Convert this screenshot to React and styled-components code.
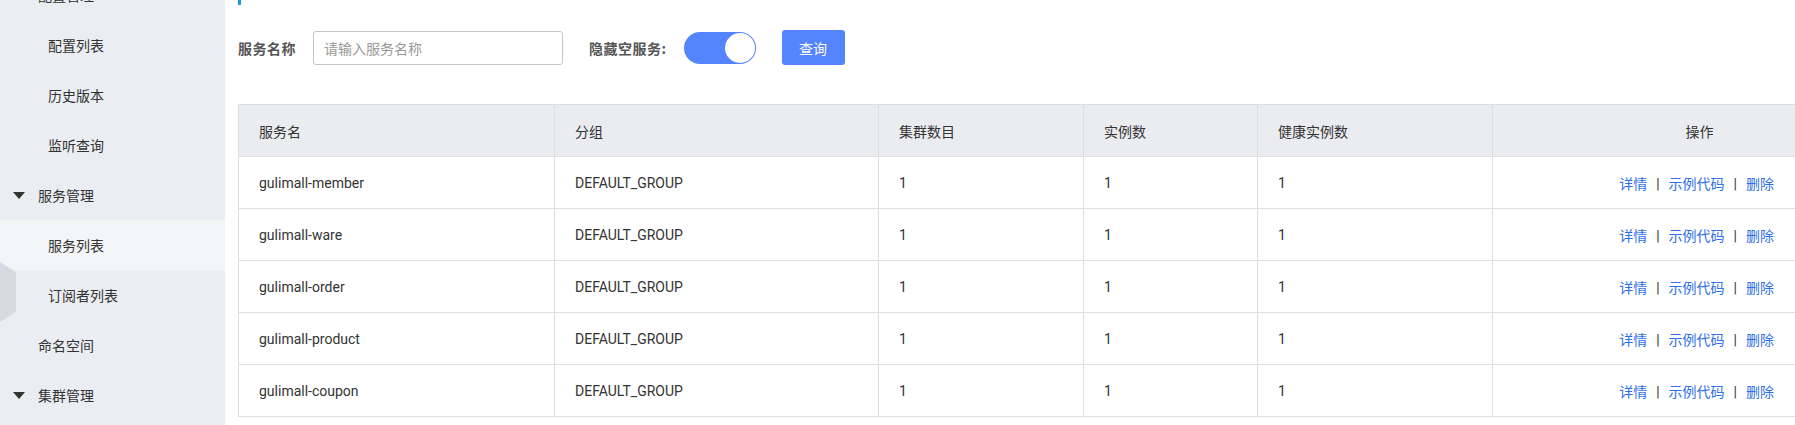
import React from 'react'
import styled, { createGlobalStyle } from 'styled-components'

const GlobalStyle = createGlobalStyle`
    html, body {
        margin: 0;
        padding: 0;
        background: #fff;
        overflow: hidden;
    }
    body {
        font-family: Roboto, "Noto Sans CJK SC", sans-serif;
        font-size: 14px;
        color: #333;
    }
    * {
        box-sizing: border-box;
    }
`;

const services = [
    'gulimall-member',
    'gulimall-ware',
    'gulimall-order',
    'gulimall-product',
    'gulimall-coupon',
];

const menu = [
    { label: '配置管理', group: true },
    { label: '配置列表', sub: true },
    { label: '历史版本', sub: true },
    { label: '监听查询', sub: true },
    { label: '服务管理', group: true },
    { label: '服务列表', sub: true, active: true },
    { label: '订阅者列表', sub: true },
    { label: '命名空间' },
    { label: '集群管理', group: true },
];

const Caret = () => (
    <svg width="12" height="7" viewBox="0 0 12 7">
        <path d="M0 0 L12 0 L6 7 Z" fill="#333" />
    </svg>
);

const App = () => {
  return (
    <Layout>
        <GlobalStyle />
        <Sidebar>
            {menu.map((item) => (
                <MenuItem key={item.label} $sub={item.sub} $group={item.group} $active={item.active}>
                    {item.group && <Caret />}
                    <span>{item.label}</span>
                </MenuItem>
            ))}
            <Collapser />
        </Sidebar>
        <Main>
            <PageTitle>服务列表 | public</PageTitle>
            <SearchForm>
                <FormLabel>服务名称</FormLabel>
                <SearchInput placeholder="请输入服务名称" />
                <FormLabel $wide>隐藏空服务:</FormLabel>
                <Switch>
                    <Knob />
                </Switch>
                <QueryButton>查询</QueryButton>
            </SearchForm>
            <TableWrap>
                <Table>
                    <colgroup>
                        <col style={{ width: 316 }} />
                        <col style={{ width: 324 }} />
                        <col style={{ width: 205 }} />
                        <col style={{ width: 174 }} />
                        <col style={{ width: 235 }} />
                        <col style={{ width: 414 }} />
                    </colgroup>
                    <thead>
                        <tr>
                            <Th>服务名</Th>
                            <Th>分组</Th>
                            <Th>集群数目</Th>
                            <Th>实例数</Th>
                            <Th>健康实例数</Th>
                            <Th $center>操作</Th>
                        </tr>
                    </thead>
                    <tbody>
                        {services.map((name) => (
                            <tr key={name}>
                                <Td>{name}</Td>
                                <Td>DEFAULT_GROUP</Td>
                                <Td>1</Td>
                                <Td>1</Td>
                                <Td>1</Td>
                                <ActionCell>
                                    <ActionLink>详情</ActionLink>
                                    <Divider>|</Divider>
                                    <ActionLink>示例代码</ActionLink>
                                    <Divider>|</Divider>
                                    <ActionLink>删除</ActionLink>
                                </ActionCell>
                            </tr>
                        ))}
                    </tbody>
                </Table>
            </TableWrap>
        </Main>
    </Layout>
  )
}

const Layout = styled.div`
    display: flex;
    width: 1795px;
    height: 425px;
    overflow: hidden;
`;

const Sidebar = styled.div`
    position: relative;
    flex: 0 0 225px;
    background-color: #eaedf1;
    margin-top: -30px;
    padding-bottom: 30px;
`;

const MenuItem = styled.div`
    display: flex;
    align-items: center;
    gap: 13px;
    height: 50px;
    padding-left: ${props => props.$sub ? '48px' : props.$group ? '13px' : '38px'};
    background-color: ${props => props.$active ? '#f4f5f7' : 'transparent'};
    color: #333;
    font-size: 14px;
    font-family: "Noto Sans CJK SC", sans-serif;

    svg {
        flex: 0 0 auto;
    }
`;

const Collapser = styled.div`
    position: absolute;
    left: 0;
    top: 292px;
    width: 16px;
    height: 60px;
    background-color: #d7dbe1;
    clip-path: polygon(0 0, 100% 17%, 100% 83%, 0 100%);
`;

const Main = styled.div`
    flex: 1;
    min-width: 0;
    padding-left: 13px;
`;

const PageTitle = styled.div`
    height: 32px;
    margin-top: -27px;
    border-left: 3px solid #1a9ad6;
    padding-left: 10px;
    line-height: 20px;
    font-size: 16px;
    color: #333;
    overflow: hidden;
`;

const SearchForm = styled.div`
    display: flex;
    align-items: center;
    height: 35px;
    margin-top: 25px;
`;

const FormLabel = styled.label`
    font-family: "Noto Sans CJK SC", sans-serif;
    font-weight: bold;
    font-size: 14px;
    letter-spacing: 0.5px;
    color: #555;
    margin-left: ${props => props.$wide ? '26px' : '0'};
    margin-right: 17px;
`;

const SearchInput = styled.input`
    width: 250px;
    height: 34px;
    border: 1px solid #c4c6cf;
    border-radius: 3px;
    padding: 0 10px;
    font-size: 14px;
    font-family: "Noto Sans CJK SC", sans-serif;
    color: #333;
    outline: none;

    &::placeholder {
        color: #999;
    }
`;

const Switch = styled.div`
    display: flex;
    align-items: center;
    justify-content: flex-end;
    width: 72px;
    height: 32px;
    padding: 1px;
    border-radius: 16px;
    background-color: #5584ff;
`;

const Knob = styled.div`
    width: 30px;
    height: 30px;
    border-radius: 50%;
    background-color: #fff;
`;

const QueryButton = styled.button`
    margin-left: 26px;
    width: 63px;
    height: 35px;
    border: none;
    border-radius: 3px;
    background-color: #5584ff;
    color: #fff;
    font-size: 14px;
    font-family: "Noto Sans CJK SC", sans-serif;
    cursor: pointer;
`;

const TableWrap = styled.div`
    margin-top: 39px;
`;

const Table = styled.table`
    width: 1668px;
    table-layout: fixed;
    border-collapse: collapse;
    border: 1px solid #dcdee3;
`;

const Th = styled.th`
    height: 52px;
    padding: 0 20px;
    background-color: #ebecf0;
    border: 1px solid #dcdee3;
    text-align: ${props => props.$center ? 'center' : 'left'};
    font-weight: normal;
    color: #333;
    font-size: 14px;
`;

const Td = styled.td`
    height: 52px;
    padding: 0 20px;
    border: 1px solid #dcdee3;
    color: #333;
    font-size: 14px;
`;

const ActionCell = styled(Td)`
    text-align: right;
    padding-right: 132px;
`;

const ActionLink = styled.a`
    color: #2f6fe6;
    cursor: pointer;
`;

const Divider = styled.span`
    margin: 0 9px;
    color: #333;
`;

export default App
